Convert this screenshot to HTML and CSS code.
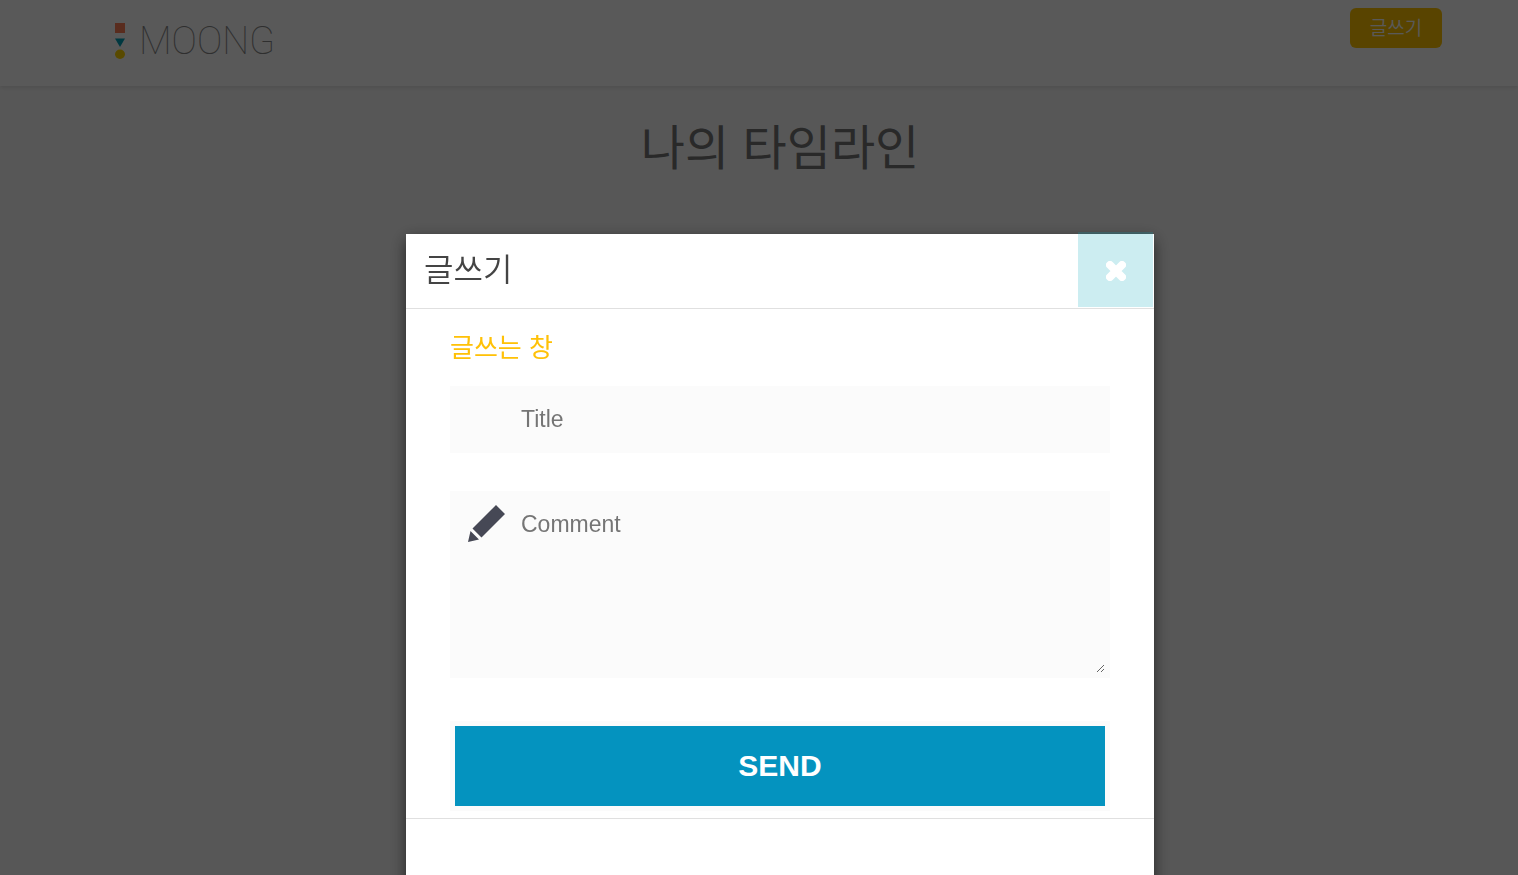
FILE: index.html
```html
<!DOCTYPE html>
<html lang="ko">
<head>
<meta charset="utf-8">
<meta name="viewport" content="width=device-width, initial-scale=1">
<title>MOONG</title>
<link rel="stylesheet" href="styles.css">
</head>
<body>
<header class="site-header">
  <a class="logo" href="#" aria-label="MOONG">
    <svg class="logo-mark" viewBox="0 0 10 36" aria-hidden="true">
      <rect class="mark-square" width="10" height="10"/>
      <path class="mark-triangle" d="M0 15.500h10L5 24z"/>
      <ellipse class="mark-circle" cx="5" cy="31.300" rx="5" ry="4.700"/>
    </svg>
    <span class="logo-text">MOONG</span>
  </a>
  <button class="write-button" type="button">글쓰기</button>
</header>
<main class="timeline">
  <h1 class="timeline-title">나의 타임라인</h1>
</main>
<div class="overlay">
  <section class="modal" role="dialog" aria-modal="true" aria-labelledby="modal-title">
    <header class="modal-header">
      <h2 class="modal-title" id="modal-title">글쓰기</h2>
      <button class="modal-close" type="button" aria-label="닫기">
        <svg class="close-icon" viewBox="0 0 20 20" aria-hidden="true"><path d="M4 4l12 12M16 4L4 16"/></svg>
      </button>
    </header>
    <form class="modal-form">
      <h3 class="form-title">글쓰는 창</h3>
      <input class="field field-title" type="text" placeholder="Title" aria-label="Title">
      <div class="comment">
        <svg class="pencil-icon" viewBox="0 0 37 37" aria-hidden="true"><path d="M28 0l9 9-23.500 23.500-9-9zM2.500 26l8.500 8.500L0 37z"/></svg>
        <textarea class="field field-comment" placeholder="Comment" aria-label="Comment"></textarea>
      </div>
      <button class="send-button" type="submit">SEND</button>
    </form>
    <footer class="modal-footer"></footer>
  </section>
</div>
</body>
</html>
```
FILE: styles.css
```css
* {
  box-sizing: border-box;
}

body {
  margin: 0;
  min-height: 100vh;
  overflow: hidden;
  background: #fafafa;
  color: #444;
  font-family: "Noto Sans CJK KR", sans-serif;
  font-weight: 300;
}

.site-header {
  display: flex;
  justify-content: space-between;
  align-items: flex-start;
  height: 86px;
  padding: 8px 76px 0 115px;
  background: #fff;
  box-shadow: 0 2px 4px rgba(0, 0, 0, 0.1);
}

.logo {
  display: flex;
  align-items: center;
  gap: 14px;
  padding-top: 9px;
  color: #888;
  text-decoration: none;
}

.logo-mark {
  width: 10px;
  height: 36px;
}

.mark-square {
  fill: #ff7f57;
}

.mark-triangle {
  fill: #00a0b8;
}

.mark-circle {
  fill: #ffd500;
}

.logo-text {
  font-family: Roboto, sans-serif;
  font-size: 38px;
  font-weight: 100;
  line-height: 48px;
}

.write-button {
  width: 92px;
  height: 40px;
  padding: 0 0 2px;
  border: 0;
  border-radius: 6px;
  background: #ffc400;
  color: #fff;
  font: 350 19px/38px "Noto Sans CJK KR", sans-serif;
}

.timeline {
  padding: 22px 0 0 42px;
  text-align: center;
}

.timeline-title {
  margin: 0;
  color: #777;
  font-size: 48px;
  font-weight: 400;
  line-height: 72px;
}

.overlay {
  position: fixed;
  inset: 0;
  display: flex;
  justify-content: center;
  align-items: flex-start;
  padding: 234px 0 0 42px;
  background: rgba(0, 0, 0, 0.65);
}

.modal {
  width: 748px;
  max-width: 100%;
  background: #fff;
  box-shadow: 0 5px 15px rgba(0, 0, 0, 0.6);
}

.modal-header {
  display: flex;
  justify-content: space-between;
  height: 75px;
  border-bottom: 1px solid #e0e0e0;
}

.modal-title {
  margin: 0;
  padding: 10px 18px;
  color: #444;
  font-size: 32px;
  font-weight: 350;
  line-height: 46px;
}

.modal-close {
  display: grid;
  place-items: center;
  width: 75px;
  height: 75px;
  margin: -2px 1px 0 0;
  padding: 2px 0 0;
  border: 0;
  background: rgba(0, 164, 184, 0.2);
}

.close-icon {
  width: 20px;
  height: 20px;
  fill: none;
  stroke: #fff;
  stroke-linecap: round;
  stroke-width: 8;
}

.modal-form {
  display: flex;
  flex-direction: column;
  padding: 18px 44px 7px;
}

.form-title {
  margin: 0 0 21px;
  color: #ffc107;
  font-size: 26px;
  font-weight: 400;
  line-height: 38px;
}

.field {
  display: block;
  width: 100%;
  margin: 0;
  border: 5px solid #fbfbfb;
  border-radius: 0;
  background: #fbfbfb;
  color: #464855;
  font-family: "Liberation Sans", Arial, sans-serif;
  font-size: 23px;
  line-height: 27px;
}

.field::placeholder {
  color: #757575;
}

.field-title {
  height: 67px;
  margin-bottom: 38px;
  padding: 15px 15px 15px 66px;
}

.comment {
  position: relative;
  margin-bottom: 43px;
}

.pencil-icon {
  position: absolute;
  top: 14px;
  left: 18px;
  width: 37px;
  height: 37px;
  fill: #464855;
}

.field-comment {
  height: 187px;
  padding: 15px 15px 15px 66px;
  resize: vertical;
}

.send-button {
  height: 90px;
  padding: 0;
  border: 5px solid #fbfbfb;
  background: #0493bf;
  color: #fff;
  font: 700 30px/36px "Liberation Sans", Arial, sans-serif;
}

.modal-footer {
  min-height: 100px;
  border-top: 1px solid #e0e0e0;
}
```
